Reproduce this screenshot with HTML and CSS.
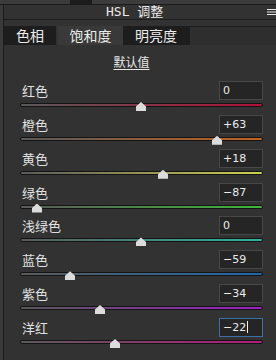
FILE: index.html
```html
<!DOCTYPE html>
<html lang="zh">
  <head>
    <meta charset="UTF-8" />
    <title>HSL 调整</title>
    <link rel="stylesheet" href="styles.css">
  </head>
  <body>
    <div class="topbar">
      <div class="seg seg-a"></div>
      <div class="seg seg-gap"></div>
      <div class="seg seg-b"></div>
    </div>
    <div class="panel">
      <div class="header">
        <span class="title">HSL 调整</span>
        <svg class="menu" width="9" height="6" viewBox="0 0 9 6">
          <rect x="0" y="0" width="9" height="1" fill="#e8e8e8" />
          <rect x="0" y="2.5" width="9" height="1" fill="#e8e8e8" />
          <rect x="0" y="5" width="9" height="1" fill="#e8e8e8" />
        </svg>
      </div>
      <div class="tabs">
        <div class="tab tab-first">色相</div>
        <div class="tab tab-active">饱和度</div>
        <div class="tab">明亮度</div>
        <div class="tab-rest"></div>
      </div>
      <div class="main">
        <div class="defaults">默认值</div>

        <div class="row">
          <div class="line"><span class="label">红色</span><div class="value">0</div></div>
          <div class="track red"><span class="thumb" style="left: 115px"></span></div>
        </div>
        <div class="row">
          <div class="line"><span class="label">橙色</span><div class="value">+63</div></div>
          <div class="track orange"><span class="thumb" style="left: 191px"></span></div>
        </div>
        <div class="row">
          <div class="line"><span class="label">黄色</span><div class="value">+18</div></div>
          <div class="track yellow"><span class="thumb" style="left: 137px"></span></div>
        </div>
        <div class="row">
          <div class="line"><span class="label">绿色</span><div class="value">−87</div></div>
          <div class="track green"><span class="thumb" style="left: 11px"></span></div>
        </div>
        <div class="row">
          <div class="line"><span class="label">浅绿色</span><div class="value">0</div></div>
          <div class="track aqua"><span class="thumb" style="left: 115px"></span></div>
        </div>
        <div class="row">
          <div class="line"><span class="label">蓝色</span><div class="value">−59</div></div>
          <div class="track blue"><span class="thumb" style="left: 44px"></span></div>
        </div>
        <div class="row">
          <div class="line"><span class="label">紫色</span><div class="value">−34</div></div>
          <div class="track purple"><span class="thumb" style="left: 74px"></span></div>
        </div>
        <div class="row">
          <div class="line"><span class="label">洋红</span><div class="value value-focus">−22<span class="caret"></span></div></div>
          <div class="track magenta"><span class="thumb" style="left: 89px"></span></div>
        </div>
      </div>
    </div>
  </body>
</html>
```

FILE: styles.css
```css
* {
  margin: 0;
  padding: 0;
  box-sizing: border-box;
}
body {
  width: 276px;
  height: 360px;
  overflow: hidden;
  background-color: #3a3a3a;
  font-family: "Noto Sans CJK SC", "DejaVu Sans", sans-serif;
  color: #e4e4e4;
}
.topbar {
  display: flex;
  height: 5px;
  border-bottom: 1px solid #1a1a1a;
}
.seg-a {
  width: 70px;
  background-color: #3c3c3c;
}
.seg-gap {
  width: 22px;
  background-color: #1c1c1c;
}
.seg-b {
  flex: 1;
  background-color: #3c3c3c;
}
.panel {
  margin-left: 3px;
  height: 355px;
  border-left: 1px solid #1b1b1b;
  background-color: #323232;
}
.header {
  position: relative;
  height: 15px;
  border-bottom: 1px solid #1e1e1e;
  display: flex;
  align-items: center;
  padding-left: 102px;
}
.title {
  font-family: "DejaVu Sans Mono", "Noto Sans CJK SC", monospace;
  font-size: 13px;
  line-height: 14px;
  color: #e8e8e8;
}
.menu {
  position: absolute;
  right: 0;
  top: 4px;
}
.tabs {
  display: flex;
  height: 19px;
  margin-top: 6px;
  background-color: #323232;
}
.tab {
  width: 66px;
  background-color: #1d1d1d;
  font-size: 14px;
  line-height: 19px;
  text-align: center;
  color: #ececec;
}
.tab-first {
  width: 52px;
  margin-right: 2px;
}
.tab-active {
  width: 65px;
  background-color: #393939;
}
.tab-rest {
  flex: 1;
  background-color: #2e2e2e;
  border-top: 1px solid #1c1c1c;
  border-left: 1px solid #1c1c1c;
}
.main {
  padding: 9px 13px 0 16px;
}
.defaults {
  width: 100%;
  text-align: center;
  font-size: 12px;
  line-height: 16px;
  text-decoration: underline;
  text-underline-offset: 2px;
  color: #e8e8e8;
  margin-left: -10px;
  margin-bottom: 11px;
}
.row {
  height: 33.85px;
}
.line {
  display: flex;
  align-items: center;
  justify-content: space-between;
  height: 19px;
}
.label {
  padding-left: 2px;
  font-size: 13px;
  color: #e2e2e2;
}
.value {
  width: 44px;
  height: 19px;
  background-color: #252525;
  border: 1px solid #474747;
  font-family: "DejaVu Sans", sans-serif;
  font-size: 11px;
  line-height: 17px;
  padding-left: 3px;
  color: #ececec;
  display: flex;
  align-items: center;
}
.value-focus {
  border-color: #3d6fa6;
}
.caret {
  display: inline-block;
  width: 1px;
  height: 12px;
  background-color: #f0f0f0;
  margin-left: 1px;
}
.track {
  position: relative;
  height: 4px;
  margin-top: 3px;
  border: 1px solid #141414;
  border-radius: 2px;
}
.thumb {
  position: absolute;
  top: -2px;
  width: 10px;
  height: 9px;
  background-color: #dcdcdc;
  clip-path: polygon(50% 0, 100% 50%, 100% 100%, 0 100%, 0 50%);
}
.red { background: linear-gradient(to right, #5a5a5a, #b01238); }
.orange { background: linear-gradient(to right, #5a5a5a, #c4621e); }
.yellow { background: linear-gradient(to right, #5a5a5a, #cfd050); }
.green { background: linear-gradient(to right, #5a5a5a, #3fb63a); }
.aqua { background: linear-gradient(to right, #5a5a5a, #2bb59a); }
.blue { background: linear-gradient(to right, #5a5a5a, #1e67aa); }
.purple { background: linear-gradient(to right, #5a5a5a, #9b1ec4); }
.magenta { background: linear-gradient(to right, #5a5a5a, #b21c7c); }
```
